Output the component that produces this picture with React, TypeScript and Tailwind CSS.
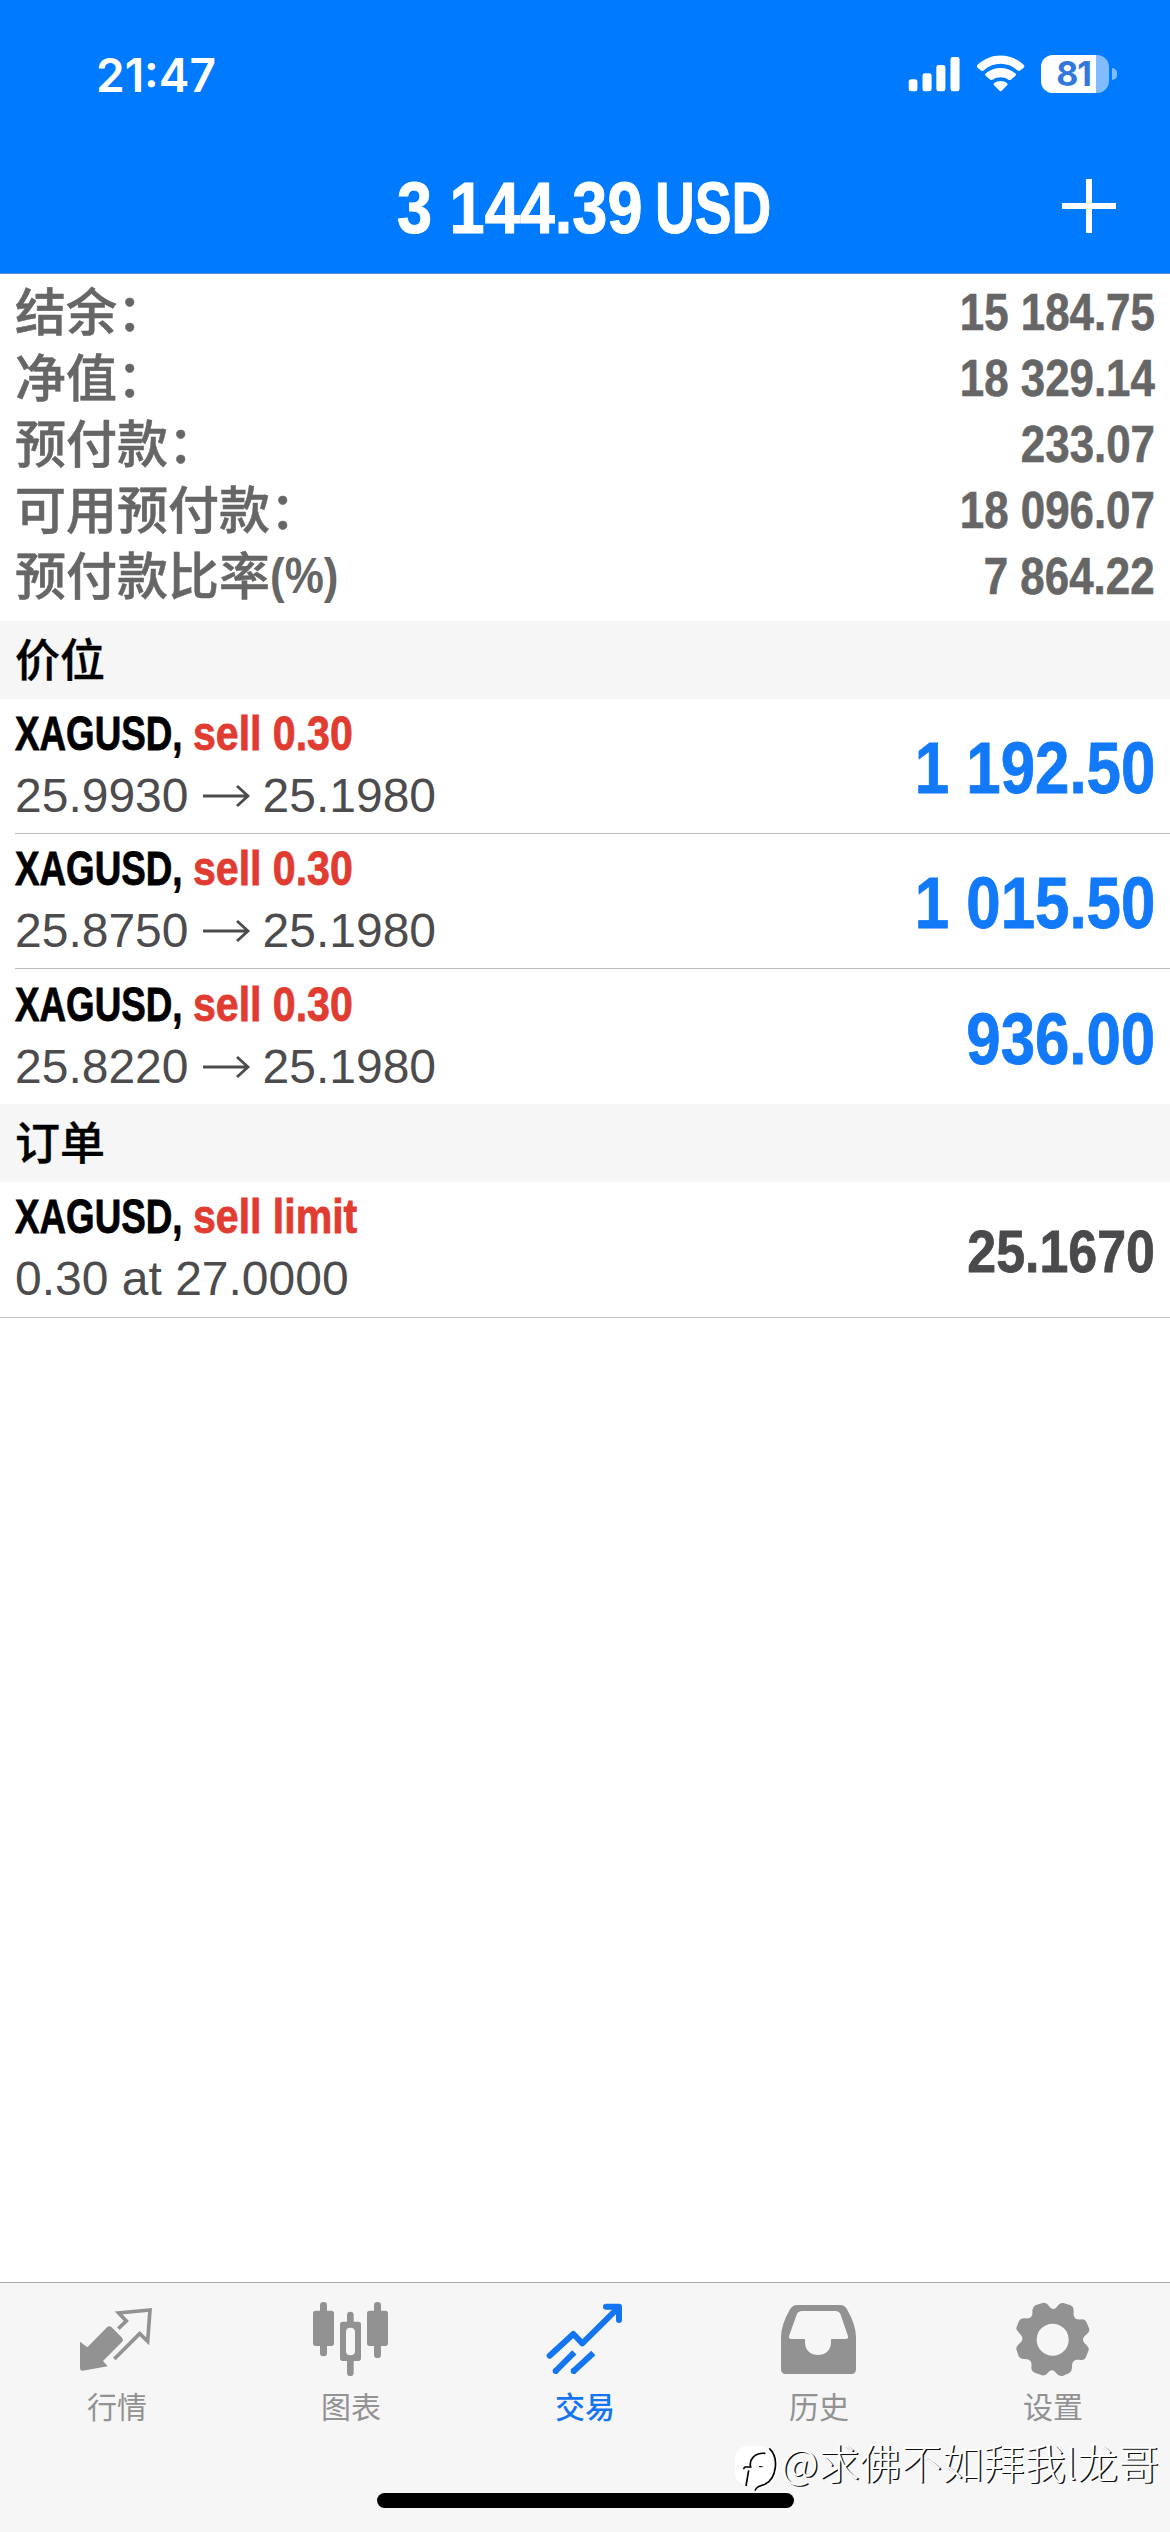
import React from "react";

const LATIN = "font-['Liberation_Sans','Noto_Sans_CJK_SC',sans-serif]";
const CJK = "font-['Noto_Sans_CJK_SC',sans-serif]";

const summary = [
  { label: "结余：", value: "15 184.75" },
  { label: "净值：", value: "18 329.14" },
  { label: "预付款：", value: "233.07" },
  { label: "可用预付款：", value: "18 096.07" },
  { label: "预付款比率", suffix: "(%)", value: "7 864.22" },
];

const positions = [
  { open: "25.9930", current: "25.1980", profit: "1 192.50" },
  { open: "25.8750", current: "25.1980", profit: "1 015.50" },
  { open: "25.8220", current: "25.1980", profit: "936.00" },
];

function StatusBar() {
  return (
    <div className="flex h-[132px] items-center justify-between pt-[17px] pr-[53px] pl-[96px]">
      <span className="font-['Inter',sans-serif] text-[46px] leading-none font-semibold">21:47</span>
      <div className="flex items-center pb-[2px]">
        <svg className="h-[38px] w-[118px]" viewBox="843 165 325 113" preserveAspectRatio="none" fill="currentColor">
          <rect x="845" y="237" width="24" height="36" rx="7" />
          <rect x="883" y="219" width="25" height="54" rx="7" />
          <rect x="921" y="195" width="25" height="78" rx="7" />
          <rect x="960" y="171" width="25" height="102" rx="7" />
          <path d="M1034 195C1070 157 1126 157 1162 195Q1165 199 1162 202L1152 211Q1148 214 1144 210C1116 185 1080 185 1052 210Q1048 214 1044 211L1034 202Q1031 199 1034 195Z" />
          <path d="M1056 221C1079 198 1117 198 1140 221Q1142 224 1139 227L1127 238Q1123 241 1119 238C1106 229 1090 229 1077 238Q1073 241 1069 238L1057 227Q1054 224 1056 221Z" />
          <path d="M1080 249C1090 240 1106 240 1116 249Q1119 252 1116 255L1101 271Q1098 274 1095 271L1080 255Q1077 252 1080 249Z" />
        </svg>
        <div className="ml-[15px] flex h-[38px] w-[68px] rounded-[12px] bg-[#80bcff]">
          <div className="flex w-[55px] items-center justify-end rounded-l-[12px] bg-white pr-[5px] font-['Inter',sans-serif] text-[34px] leading-[38px] font-bold tracking-[-1px] text-[#3478dc]">
            81
          </div>
        </div>
        <div className="ml-[3px] h-[12px] w-[5px] rounded-r-full bg-[#80bcff]" />
      </div>
    </div>
  );
}

function Header() {
  return (
    <header className="h-[274px] shrink-0 border-b border-[#5b8fd0] bg-[#007aff] text-white">
      <StatusBar />
      <div className="grid h-[141px] grid-cols-[1fr_auto_1fr] items-start">
        <span />
        <h1 className="flex w-[374px] pt-[40px] text-[72px] leading-[72px] font-bold whitespace-nowrap [-webkit-text-stroke:1px_currentColor]">
          <span className="-ml-[1px] w-[258px] shrink-0 origin-left scale-x-[0.876]">3 144.39</span>
          <span className="origin-left scale-x-[0.765]">USD</span>
        </h1>
        <svg className="mt-[47px] mr-[54px] h-[54px] w-[54px] justify-self-end" viewBox="0 0 54 54" stroke="currentColor" strokeWidth="6">
          <path d="M0 27H54M27 0V54" />
        </svg>
      </div>
    </header>
  );
}

function Instrument({ action }: { action: string }) {
  return (
    <div className="flex h-[48px] text-[48px] leading-[48px] font-bold whitespace-pre [-webkit-text-stroke:0.8px_currentColor]">
      <span className="w-[178px] origin-left scale-x-[0.766] text-black">XAGUSD,</span>
      <span className="origin-left scale-x-[0.855] text-[#e03c31]">{action}</span>
    </div>
  );
}

function SectionTitle({ children }: { children: React.ReactNode }) {
  return (
    <h2 className={`${CJK} flex h-[78px] shrink-0 items-center bg-[#f6f6f6] pb-[4px] pl-[15px] text-[45px] leading-[74px] font-medium text-black [-webkit-text-stroke:0.4px_currentColor]`}>
      {children}
    </h2>
  );
}

function Arrow() {
  return (
    <svg className="mr-[11px] ml-[13px] h-[22px] w-[50px]" viewBox="0 0 50 22" fill="none" stroke="currentColor" strokeWidth="2.8">
      <path d="M1 11H46M35 1L46 11L35 21" />
    </svg>
  );
}

function Tab({ label, active, children, box }: { label: string; active?: boolean; children: React.ReactNode; box: string }) {
  return (
    <div className={`flex flex-1 flex-col items-center ${active ? "text-[#1475f0]" : "text-[#929292]"}`}>
      <svg className="h-[84px] w-[84px]" viewBox={box} fill="currentColor">
        {children}
      </svg>
      <span className={`${CJK} mt-[7px] text-[30px] leading-[34px] ${active ? "font-medium" : "font-normal"}`}>{label}</span>
    </div>
  );
}

function TabBar() {
  return (
    <nav className="relative flex h-[250px] shrink-0 border-t border-[#a9a9a9] bg-[#f6f6f6] pt-[14px]">
      <Tab label="行情" box="225 111 252 252">
        <path d="M240 245L262 262L321 202Q328 195 335 202L366 233Q372 240 366 246L309 303L323 319L248 332Q240 332 240 324Z" />
        <path fill="none" stroke="currentColor" strokeWidth="11" d="M355 206L379 183L356 159L450 150L443 244L419 221L343 297" />
      </Tab>
      <Tab label="图表" box="927 111 252 252">
        <rect x="939" y="152" width="63" height="106" rx="8" />
        <rect x="960" y="126" width="21" height="163" rx="10" />
        <path fillRule="evenodd" d="M1028 185H1075Q1083 185 1083 193V295Q1083 303 1075 303H1028Q1020 303 1020 295V193Q1020 185 1028 185ZM1051 203Q1038 203 1038 216V274Q1038 286 1051 286Q1065 286 1065 274V216Q1065 203 1051 203Z" />
        <path d="M1041 190V165Q1041 155 1051 155Q1061 155 1061 165V190ZM1041 300V338Q1041 348 1051 348Q1061 348 1061 338V300Z" />
        <rect x="1101" y="152" width="63" height="106" rx="8" />
        <rect x="1122" y="126" width="21" height="168" rx="10" />
      </Tab>
      <Tab label="交易" active box="249 111 252 252">
        <g fill="none" stroke="currentColor" strokeWidth="18">
          <path strokeLinecap="round" strokeLinejoin="round" d="M269 287L340 222L367 250L472 146M438 140H477V180" />
          <path d="M284 336L343 277M338 336L400 279" />
        </g>
        <circle cx="287" cy="333" r="9" />
        <circle cx="341" cy="333" r="9" />
      </Tab>
      <Tab label="历史" box="951 111 252 252">
        <path fillRule="evenodd" d="M1012 135H1140Q1154 135 1161 148Q1188 195 1188 232V328Q1188 342 1174 342H977Q963 342 963 328V232Q963 195 990 148Q998 135 1012 135ZM1026 153Q1014 153 1010 164L988 226Q984 237 994 237H1035V246C1035 272 1053 285 1074 285S1113 272 1113 246V237H1156Q1168 237 1163 226L1142 164Q1138 153 1126 153Z" />
      </Tab>
      <Tab label="设置" box="903 111 252 252">
        <path
          fillRule="evenodd"
          d="M1000 128Q1009 128 1014 134C1026 151 1034 151 1045 135Q1051 128 1060 129L1082 136Q1091 141 1091 151C1089 174 1095 181 1116 178Q1125 178 1129 185L1138 207Q1139 215 1131 222C1115 235 1115 242 1131 257Q1139 264 1136 271L1127 293Q1122 302 1112 300C1093 297 1085 304 1086 323Q1086 333 1078 339L1058 348Q1047 349 1041 342C1030 327 1023 327 1011 341Q1005 348 996 346L974 338Q964 333 964 323C967 304 960 296 941 297Q931 298 926 289L919 268Q918 260 926 253C941 240 941 232 927 218Q918 211 919 203L927 183Q932 174 942 175C963 177 969 171 967 151Q968 141 976 136ZM1028 191A48 48 0 1 0 1028 287A48 48 0 1 0 1028 191Z"
        />
      </Tab>
      <div className="absolute top-[210px] left-[377px] h-[15px] w-[417px] rounded-full bg-black" />
      <div className="absolute top-[153px] left-[734px] flex items-start text-white">
        <svg className="mt-[8px] h-[50px] w-[46px]" viewBox="70 555 138 150" fill="none" stroke="#000">
          <rect x="73" y="561" width="112" height="118" rx="38" fill="#fff" stroke="none" />
          <path d="M176 568C208 596 203 660 163 678C148 682 138 680 133 695" stroke="#fff" strokeWidth="12" />
          <path d="M176 568C206 596 198 658 163 676C146 682 138 682 133 695M106 681L114 634M98 630L103 624H120C114 602 132 580 164 583" strokeWidth="5" />
          <path d="M145 623H156" strokeWidth="3" />
        </svg>
        <span className={`${CJK} ml-[1px] text-[41px] leading-[50px] font-light tracking-[0.2px] whitespace-nowrap [text-shadow:1.5px_1px_0_#111]`}>@求佛不如拜我l龙哥</span>
      </div>
    </nav>
  );
}

export default function App() {
  return (
    <div className={`${LATIN} flex h-[2532px] w-[1170px] flex-col overflow-hidden bg-white`}>
      <Header />
      <section className="h-[347px] shrink-0 pt-[5px] pr-[15px] pl-[15px] text-[#666666]">
        {summary.map((row) => (
          <div key={row.label} className="flex h-[66px] items-center justify-between">
            <span className="flex items-start">
              <span className={`${CJK} mb-[6px] text-[51px] leading-[60px] font-medium [-webkit-text-stroke:0.5px_currentColor]`}>{row.label}</span>
              {row.suffix && (
                <span className="origin-left scale-x-[0.88] text-[50px] leading-[66px] font-bold">{row.suffix}</span>
              )}
            </span>
            <span className="origin-right scale-x-[0.86] pt-[2px] text-[51px] leading-[64px] font-bold [-webkit-text-stroke:0.6px_currentColor]">{row.value}</span>
          </div>
        ))}
      </section>

      <SectionTitle>价位</SectionTitle>
      <ul className="shrink-0 pl-[15px]">
        {positions.map((p) => (
          <li key={p.open} className="flex h-[135px] items-center justify-between border-b border-[#bcbcbe] pr-[15px] last:border-b-0">
            <div className="pb-[2px]">
              <Instrument action="sell 0.30" />
              <div className="mt-[14px] flex h-[48px] items-center text-[48px] leading-[48px] text-[#4c4c4e]">
                <span>{p.open}</span>
                <Arrow />
                <span>{p.current}</span>
              </div>
            </div>
            <span className="origin-right scale-x-[0.858] pt-[4px] text-[72px] leading-[72px] font-bold text-[#1279f8] [-webkit-text-stroke:0.8px_currentColor]">{p.profit}</span>
          </li>
        ))}
      </ul>

      <SectionTitle>订单</SectionTitle>
      <div className="flex h-[136px] shrink-0 items-center justify-between border-b border-[#c8c8ca] px-[15px]">
        <div className="pb-[3px]">
          <Instrument action="sell limit" />
          <div className="mt-[14px] h-[48px] text-[48px] leading-[48px] text-[#4c4c4e]">0.30 at 27.0000</div>
        </div>
        <span className="origin-right scale-x-[0.865] pt-[4px] text-[60px] leading-[60px] font-bold text-[#4a4a4d] [-webkit-text-stroke:0.8px_currentColor]">25.1670</span>
      </div>

      <main className="flex-1" />
      <TabBar />
    </div>
  );
}
